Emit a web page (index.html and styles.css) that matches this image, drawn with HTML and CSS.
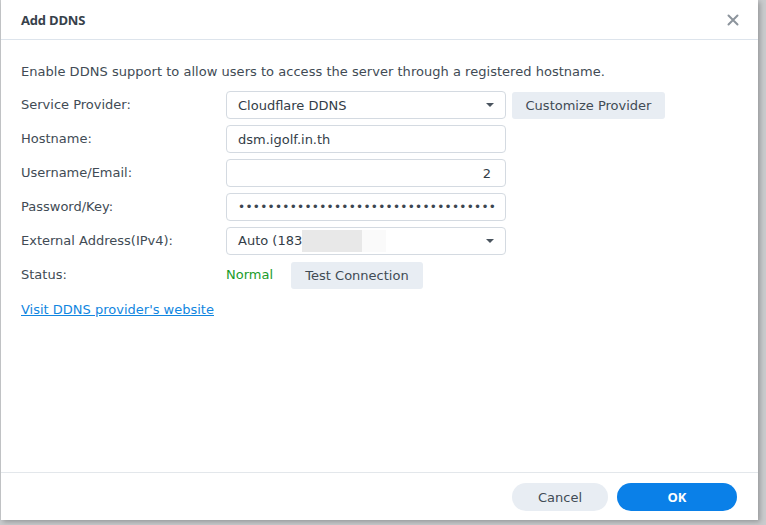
FILE: index.html
```html
<!DOCTYPE html>
<html>
<head>
<meta charset="utf-8">
<link rel="stylesheet" href="styles.css">
</head>
<body>
<div class="desk">
  <div class="dialog">
    <div class="header">
      <span class="title">Add DDNS</span>
      <span class="close">
        <svg width="12" height="12" viewBox="0 0 12 12"><path d="M1.5 1.5 L10.5 10.5 M10.5 1.5 L1.5 10.5" stroke="#8c949c" stroke-width="2" stroke-linecap="round"/></svg>
      </span>
    </div>
    <div class="body">
      <p class="desc">Enable DDNS support to allow users to access the server through a registered hostname.</p>
      <div class="form">
        <label class="lbl">Service Provider:</label>
        <div class="ctl">
          <div class="field select"><span>Cloudflare DDNS</span><span class="caret"></span></div>
          <button class="btn grey cust">Customize Provider</button>
        </div>
        <label class="lbl">Hostname:</label>
        <div class="ctl"><div class="field">dsm.igolf.in.th</div></div>
        <label class="lbl">Username/Email:</label>
        <div class="ctl"><div class="field right">2</div></div>
        <label class="lbl">Password/Key:</label>
        <div class="ctl"><div class="field dots">&#8226;&#8226;&#8226;&#8226;&#8226;&#8226;&#8226;&#8226;&#8226;&#8226;&#8226;&#8226;&#8226;&#8226;&#8226;&#8226;&#8226;&#8226;&#8226;&#8226;&#8226;&#8226;&#8226;&#8226;&#8226;&#8226;&#8226;&#8226;&#8226;&#8226;&#8226;&#8226;&#8226;&#8226;&#8226;</div></div>
        <label class="lbl">External Address(IPv4):</label>
        <div class="ctl">
          <div class="field select"><span class="auto">Auto (183<span class="redact"></span><span class="redact2"></span></span><span class="caret"></span></div>
        </div>
        <label class="lbl">Status:</label>
        <div class="ctl status">
          <span class="ok">Normal</span>
          <button class="btn grey test">Test Connection</button>
        </div>
      </div>
      <a class="link" href="#">Visit DDNS provider's website</a>
    </div>
    <div class="footer">
      <button class="btn pill grey cancel">Cancel</button>
      <button class="btn pill blue okb">OK</button>
    </div>
  </div>
</div>
</body>
</html>
```

FILE: styles.css
```css
html, body {
  margin: 0;
  padding: 0;
}
body {
  width: 766px;
  height: 525px;
  background: #c9cbcd;
  font-family: "DejaVu Sans", Verdana, sans-serif;
  font-size: 13px;
  color: #414b55;
  overflow: hidden;
}
.desk {
  padding-left: 1px;
}
.dialog {
  width: 757px;
  height: 520px;
  background: #fff;
  display: flex;
  flex-direction: column;
  box-shadow: 2px 2px 5px rgba(0,0,0,0.25);
}
.header {
  height: 40px;
  box-sizing: border-box;
  border-bottom: 1px solid #dde4ec;
  display: flex;
  align-items: center;
  justify-content: space-between;
  padding: 0 19px 0 20px;
}
.title {
  font-family: "Open Sans", sans-serif;
  font-weight: 700;
  font-size: 13px;
  color: #37414b;
  letter-spacing: -0.2px;
}
.close {
  display: flex;
}
.body {
  flex: 1;
  padding: 23px 20px 0 20px;
}
.desc {
  margin: 0 0 11px 0;
  line-height: 17px;
  letter-spacing: 0.03px;
}
.form {
  display: grid;
  grid-template-columns: 205px 1fr;
  row-gap: 6px;
  align-items: center;
}
.lbl {
  line-height: 28px;
}
.ctl {
  display: flex;
  align-items: center;
  gap: 6px;
}
.field {
  box-sizing: border-box;
  width: 280px;
  height: 28px;
  border: 1px solid #d4dae1;
  border-radius: 4px;
  padding: 0 11px;
  display: flex;
  align-items: center;
  color: #333d47;
}
.field.right {
  justify-content: flex-end;
  padding-right: 14px;
}
.field.dots {
  font-size: 12px;
  letter-spacing: 0.3px;
  color: #3c4650;
  padding-left: 11px;
  overflow: hidden;
  white-space: nowrap;
}
.select {
  justify-content: space-between;
}
.auto {
  white-space: nowrap;
}
.caret {
  width: 0;
  height: 0;
  border-left: 4px solid transparent;
  border-right: 4px solid transparent;
  border-top: 4px solid #4a545e;
}
.redact {
  display: inline-block;
  width: 60px;
  height: 22px;
  background: #e8e8e8;
  vertical-align: middle;
}
.redact2 {
  display: inline-block;
  width: 24px;
  height: 22px;
  background: #fafafa;
  vertical-align: middle;
}
.btn {
  font-family: "DejaVu Sans", Verdana, sans-serif;
  font-size: 13px;
  border: none;
  height: 27px;
  border-radius: 3px;
  padding: 0;
  color: #414b55;
  cursor: default;
}
.grey {
  background: #e8edf3;
}
.cust {
  width: 153px;
}
.status {
  gap: 0;
}
.ok {
  color: #1a9c2a;
  width: 65px;
  line-height: 28px;
}
.test {
  width: 132px;
}
.link {
  display: inline-block;
  margin-top: 12px;
  color: #1186e0;
  text-decoration: underline;
  line-height: 17px;
}
.footer {
  height: 48px;
  box-sizing: border-box;
  border-top: 1px solid #e3e7eb;
  display: flex;
  justify-content: flex-end;
  align-items: flex-start;
  padding: 10px 21px 0 0;
  gap: 9px;
}
.pill {
  height: 28px;
  border-radius: 14px;
}
.cancel {
  width: 96px;
}
.blue {
  background: #0a80e8;
  color: #fff;
  font-weight: 700;
}
.okb {
  width: 120px;
  font-family: "Open Sans", sans-serif;
  font-size: 13px;
}
```
